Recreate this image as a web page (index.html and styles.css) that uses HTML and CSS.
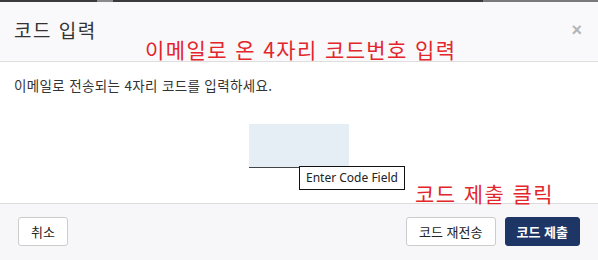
FILE: index.html
```html
<!DOCTYPE html>
<html lang="ko">
<head>
<meta charset="utf-8">
<link rel="stylesheet" href="styles.css">
</head>
<body>
<div class="modal">
  <div class="topbar"></div>
  <div class="header">
    <h1 class="title">코드 입력</h1>
    <span class="close">&times;</span>
  </div>
  <div class="body">
    <p class="desc">이메일로 전송되는 4자리 코드를 입력하세요.</p>
    <div class="field-wrap">
      <div class="field"></div>
      <div class="tooltip">Enter Code Field</div>
    </div>
  </div>
  <div class="footer">
    <button class="btn">취소</button>
    <div class="right">
      <button class="btn">코드 재전송</button>
      <button class="btn primary">코드 제출</button>
    </div>
  </div>
  <div class="note note-1">이메일로 온 4자리 코드번호 입력</div>
  <div class="note note-2">코드 제출 클릭</div>
</div>
</body>
</html>
```
FILE: styles.css
```css
* { box-sizing: border-box; }
html, body { margin: 0; padding: 0; }
body {
  width: 598px;
  height: 260px;
  overflow: hidden;
  background: #fff;
  font-family: "Noto Sans CJK KR", "Noto Sans", sans-serif;
  color: #333;
}
.modal { position: relative; width: 598px; height: 260px; }
.topbar {
  height: 2px;
  background: linear-gradient(to right, #3a3a3a 0, #3a3a3a 97px, #8a8a8a 97px, #8a8a8a 113px, #3a3a3a 113px, #3a3a3a 483px, #7a7a7a 483px);
}
.header {
  height: 60px;
  background: #f9f9fb;
  border-bottom: 1px solid #dedede;
  display: flex;
  align-items: center;
  justify-content: space-between;
  padding: 0 16px 4px 14px;
}
.title {
  margin: 0;
  font-size: 19px;
  font-weight: 400;
  color: #333;
  letter-spacing: 1.5px;
}
.close {
  font-family: "Liberation Sans", sans-serif;
  font-size: 18px;
  font-weight: 700;
  color: #b5b5b5;
  line-height: 1;
}
.body {
  height: 141px;
  padding: 14px 14px 0;
}
.desc {
  margin: 0;
  font-size: 13.5px;
  line-height: 18px;
  letter-spacing: 0.35px;
  color: #333;
}
.field-wrap {
  position: relative;
  width: 100px;
  margin: 30px 0 0 235px;
}
.field {
  height: 44px;
  background: #e5edf5;
  border-bottom: 1px solid #444;
}
.tooltip {
  position: absolute;
  left: 50px;
  top: 42px;
  padding: 3px 6px;
  background: #fff;
  border: 1px solid #111;
  font-family: "Noto Sans", sans-serif;
  font-size: 12px;
  line-height: 16px;
  white-space: nowrap;
  color: #222;
}
.footer {
  height: 57px;
  background: #f7f7f9;
  border-top: 1px solid #dcdcdc;
  display: flex;
  align-items: center;
  justify-content: space-between;
  padding: 0 18px 2px 18px;
}
.right { display: flex; gap: 9px; }
.btn {
  font-family: "Noto Sans CJK KR", sans-serif;
  font-size: 13px;
  color: #222;
  background: #fff;
  border: 1px solid #ccc;
  border-radius: 3px;
  height: 29px;
  padding: 0 12px;
}
.btn.primary {
  background: #1d3665;
  border-color: #1d3665;
  color: #fff;
  font-weight: 700;
  padding: 0 11px;
}
.note {
  position: absolute;
  color: #e3262c;
  font-size: 21px;
  line-height: 24px;
  letter-spacing: 1.4px;
  white-space: nowrap;
}
.note-1 { left: 145px; top: 37px; }
.note-2 { left: 415px; top: 181px; }
```
